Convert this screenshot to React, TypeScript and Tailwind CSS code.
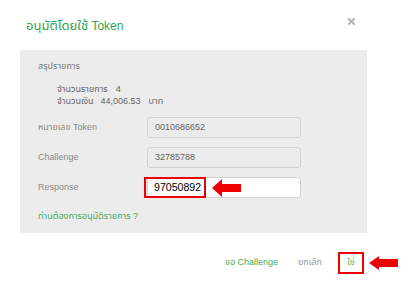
export default function App() {
  return (
    <div className="w-[418px] h-[285px] bg-white overflow-hidden font-['Liberation_Sans','Noto_Sans_Thai','Noto_Sans',sans-serif]">
      {/* Header */}
      <div className="h-[50px] flex justify-between pl-[26px] pr-[63px]">
        <div className="pt-[18px] text-[12px] leading-[16px] text-[#2ea44f]">
          <span className="text-[13px]">อนุมัติโดยใช้</span> Token
        </div>
        <div className="pt-[18px]">
          <svg width="7" height="7" viewBox="0 0 7 7">
            <path d="M1 1 L6 6 M6 1 L1 6" stroke="#b3b3b3" strokeWidth="2" strokeLinecap="square" />
          </svg>
        </div>
      </div>

      {/* Panel */}
      <div className="ml-[20px] w-[347px] h-[183px] bg-[#ececec] pl-[18px] pt-[10px] flex flex-col">
        <div className="text-[9px] leading-[12px] text-[#777]">สรุปรายการ</div>
        <div className="mt-[11px] pl-[19px] text-[9px] leading-[12px] text-[#666]">
          <div className="flex gap-[8px]">
            <span>จำนวนรายการ</span>
            <span>4</span>
          </div>
          <div className="flex gap-[7px]">
            <span>จำนวนเงิน</span>
            <span>44,006.53</span>
            <span className="ml-[1px]">บาท</span>
          </div>
        </div>

        <div className="mt-[10px] flex flex-col gap-[9px]">
          <div className="flex items-center h-[21px]">
            <div className="w-[109px] text-[9px] text-[#8a8a8a]">หมายเลข Token</div>
            <div className="w-[154px] h-[21px] rounded-[3px] border border-[#d3d3d3] bg-[#ebebeb] flex items-center pl-[7px] text-[9px] text-[#666]">
              0010686652
            </div>
          </div>
          <div className="flex items-center h-[21px]">
            <div className="w-[109px] text-[9px] text-[#8a8a8a]">Challenge</div>
            <div className="w-[154px] h-[21px] rounded-[3px] border border-[#d3d3d3] bg-[#ebebeb] flex items-center pl-[7px] text-[9px] text-[#666]">
              32785788
            </div>
          </div>
          <div className="flex items-center h-[21px]">
            <div className="w-[109px] text-[9px] text-[#8a8a8a]">Response</div>
            <div className="relative w-[154px] h-[21px] rounded-[3px] border border-[#d3d3d3] bg-white flex items-center pl-[6px] text-[10.6px] text-black">
              97050892
              <div className="absolute left-[-4px] top-[-1px] w-[62px] h-[21px] border-2 border-[#ee0000]" />
              <svg className="absolute left-[64px] top-[1px]" width="29" height="18" viewBox="0 0 29 18">
                <polygon points="0,9 10,0 10,5 29,5 29,13 10,13 10,18" fill="#ee0000" />
              </svg>
            </div>
          </div>
        </div>

        <div className="mt-[12px] text-[9px] leading-[12px] text-[#3fae62]">ท่านต้องการอนุมัติรายการ ?</div>
      </div>

      {/* Footer */}
      <div className="mt-[19px] flex items-center h-[22px] pl-[225px] text-[9px]">
        <div className="w-[73px] text-[#45ad5c]">ขอ Challenge</div>
        <div className="w-[40px] text-[#999]">ยกเลิก</div>
        <div className="w-[26px] h-[22px] border-2 border-[#ee0000] flex items-center justify-center text-[#5cb85c]">ใช่</div>
        <svg className="ml-[5px]" width="29" height="14" viewBox="0 0 29 14">
          <polygon points="0,7 10,0 10,3 29,3 29,11 10,11 10,14" fill="#ee0000" />
        </svg>
      </div>
    </div>
  );
}
